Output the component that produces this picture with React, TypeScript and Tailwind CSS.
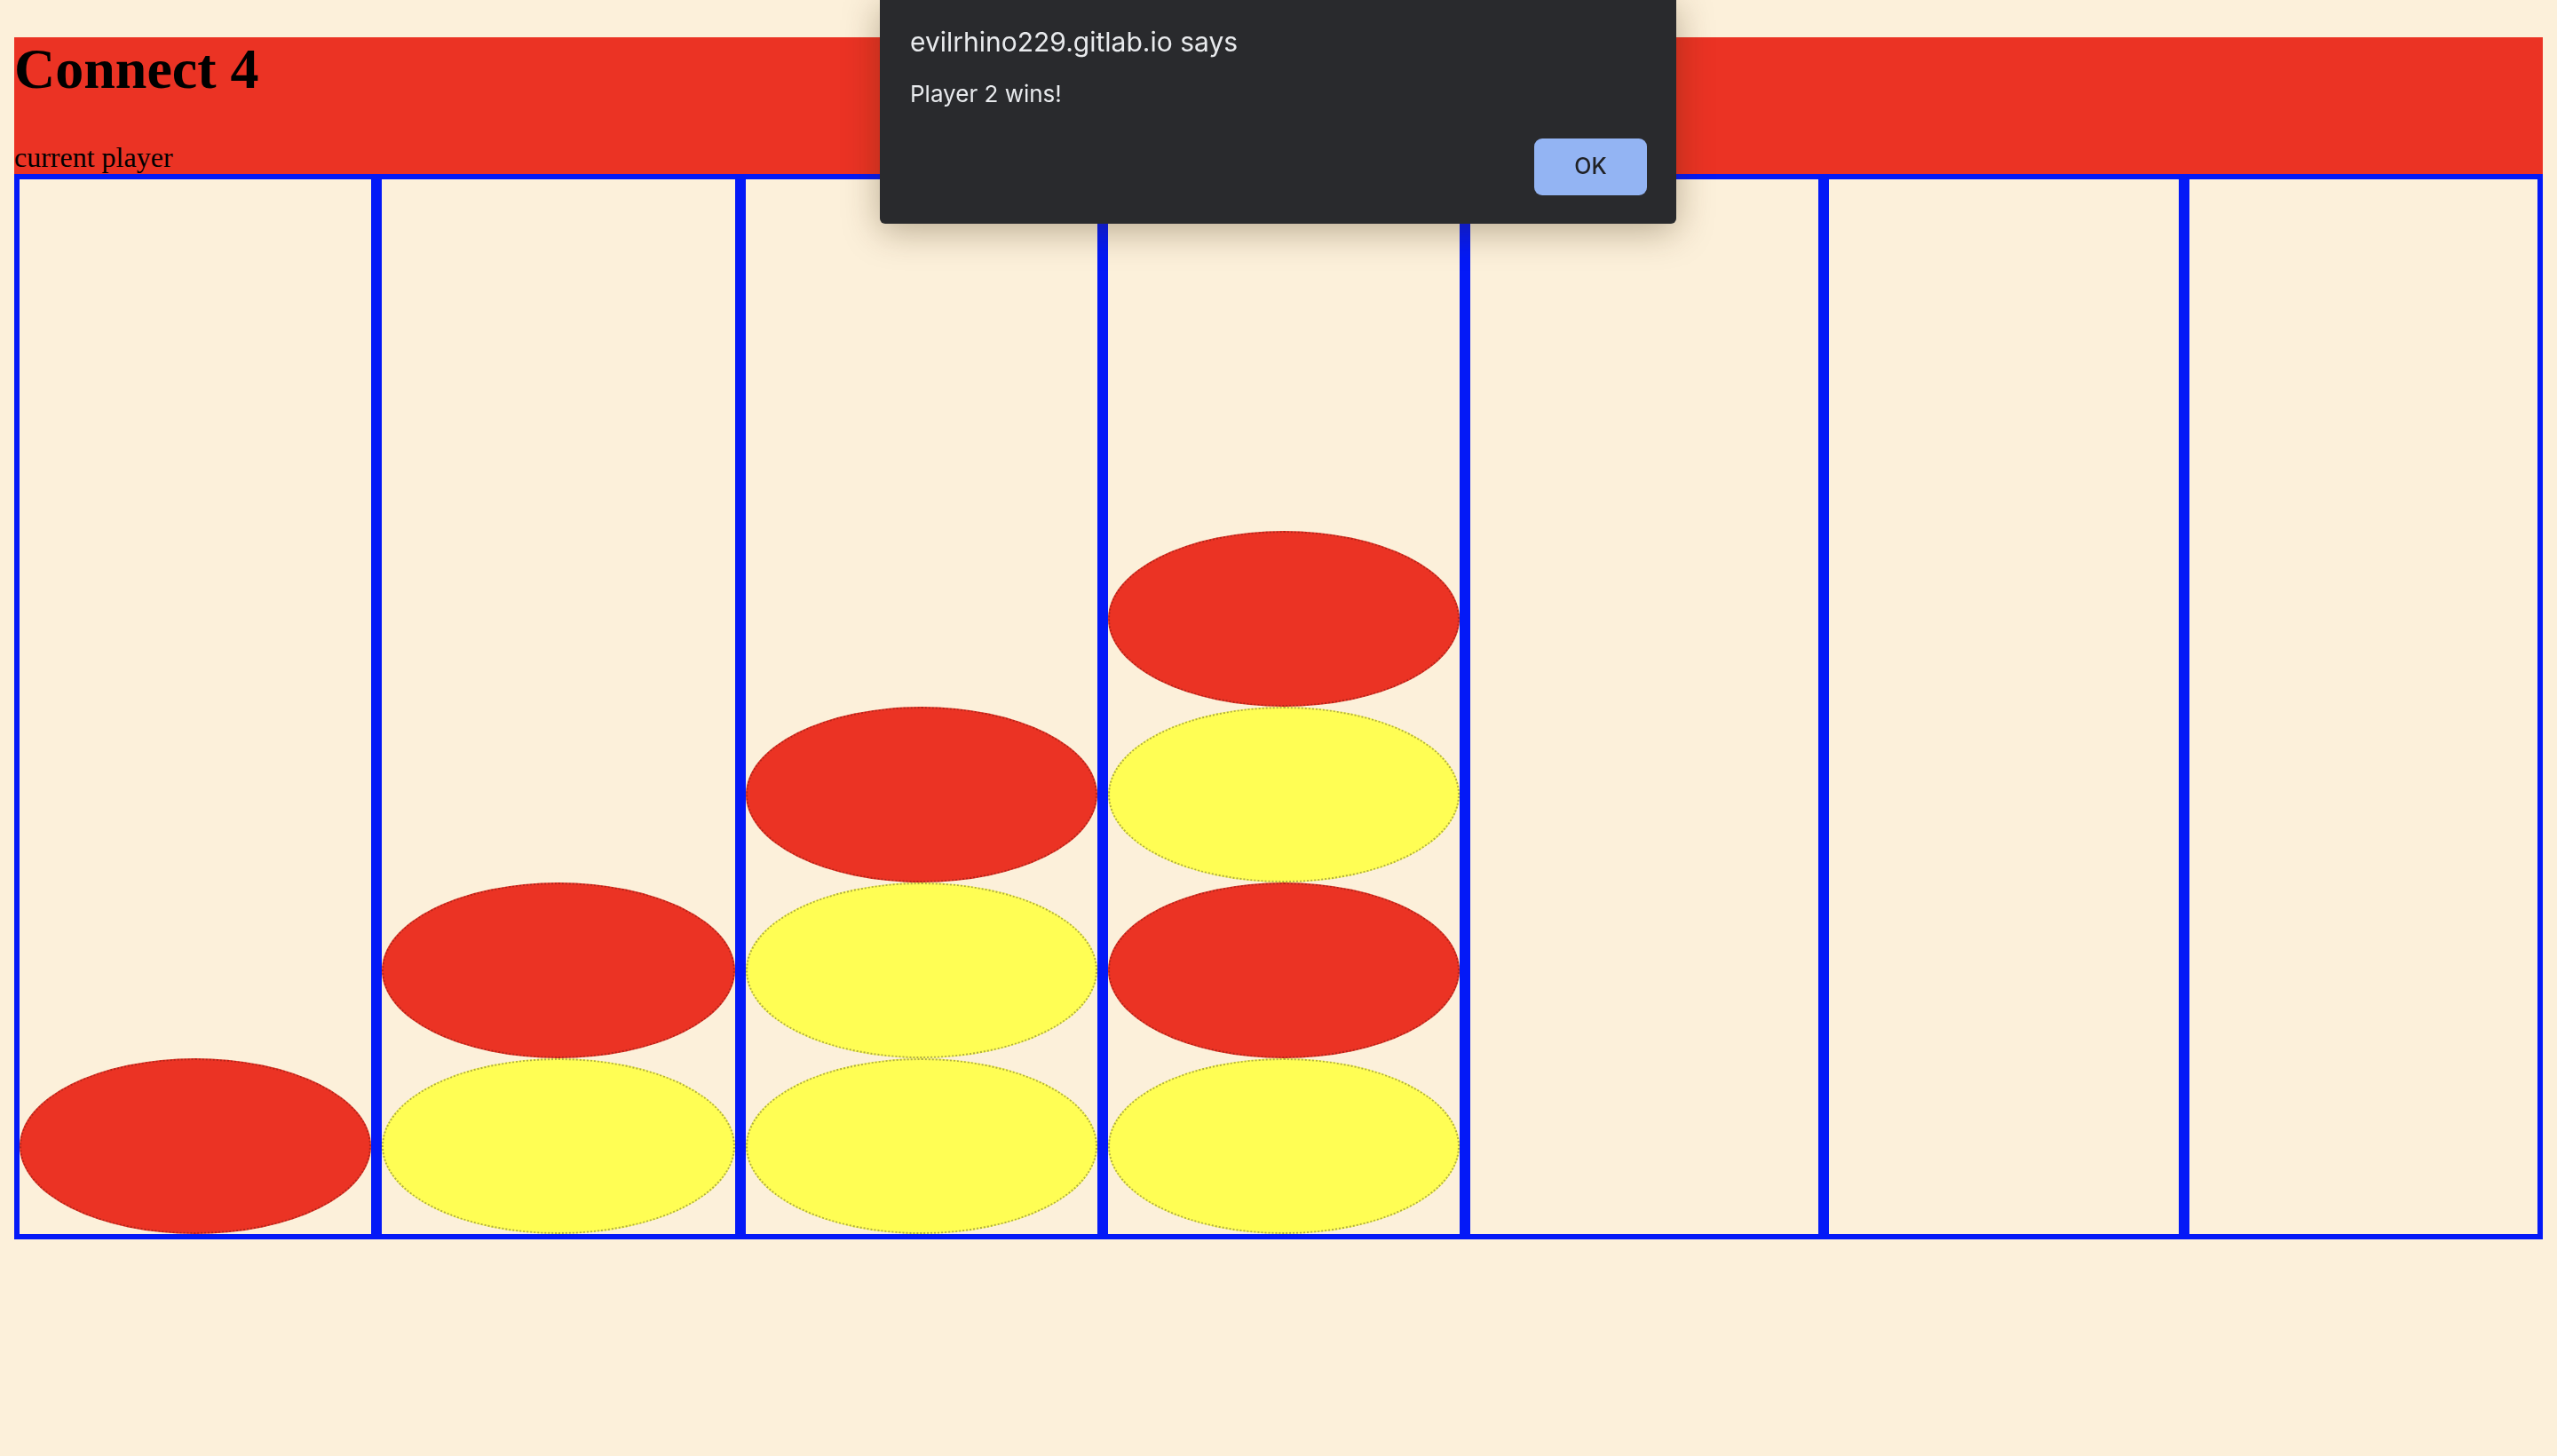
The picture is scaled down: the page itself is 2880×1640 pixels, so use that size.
const board: string[][] = [
  ["red"],
  ["yellow", "red"],
  ["yellow", "yellow", "red"],
  ["yellow", "red", "yellow", "red"],
  [],
  [],
  [],
];

function Disk({ color }: { color: string }) {
  if (color === "red") {
    return (
      <div className="h-[198px] w-full shrink-0 rounded-[50%] border-2 border-dotted border-[#9a2018]/70 bg-[#EB3324]" />
    );
  }
  return (
    <div className="h-[198px] w-full shrink-0 rounded-[50%] border-2 border-dotted border-[#8f8c3c]/70 bg-[#FFFE54]" />
  );
}

function AlertDialog() {
  return (
    <div className="fixed left-[991px] top-0 w-[897px] h-[252px] flex flex-col bg-[#292A2D] rounded-b-[6px] shadow-[0_8px_40px_rgba(60,40,10,0.35)] pl-[34px] pr-[33px] pt-[31px] pb-[32px] font-['Inter',sans-serif]">
      <div className="text-[30px] leading-[32px] text-[#E8EAED]">
        evilrhino229.gitlab.io says
      </div>
      <div className="mt-[28px] text-[26px] leading-[30px] text-[#E8EAED]">
        Player 2 wins!
      </div>
      <div className="flex justify-end mt-auto">
        <button className="w-[127px] h-[64px] rounded-[9px] bg-[#93B4F3] text-[25px] font-medium text-[#202124]">
          OK
        </button>
      </div>
    </div>
  );
}

export default function App() {
  return (
    <div className="min-h-screen bg-[#FCF0DA] px-[16px] pt-[42px] font-['Liberation_Serif',serif] text-black">
      <div className="bg-[#EB3324]">
        <h1 className="text-[64px] font-bold leading-[72px] mb-[44px]">
          Connect 4
        </h1>
        <p className="text-[32px] leading-[38px]">current player</p>
      </div>

      <div className="grid grid-cols-[408fr_410fr_408fr_408fr_404fr_406fr_404fr]">
        {board.map((col, i) => (
          <div
            key={i}
            className="h-[1200px] border-[6px] border-[#0419F7] flex flex-col-reverse"
          >
            {col.map((c, j) => (
              <Disk key={j} color={c} />
            ))}
          </div>
        ))}
      </div>

      <AlertDialog />
    </div>
  );
}
